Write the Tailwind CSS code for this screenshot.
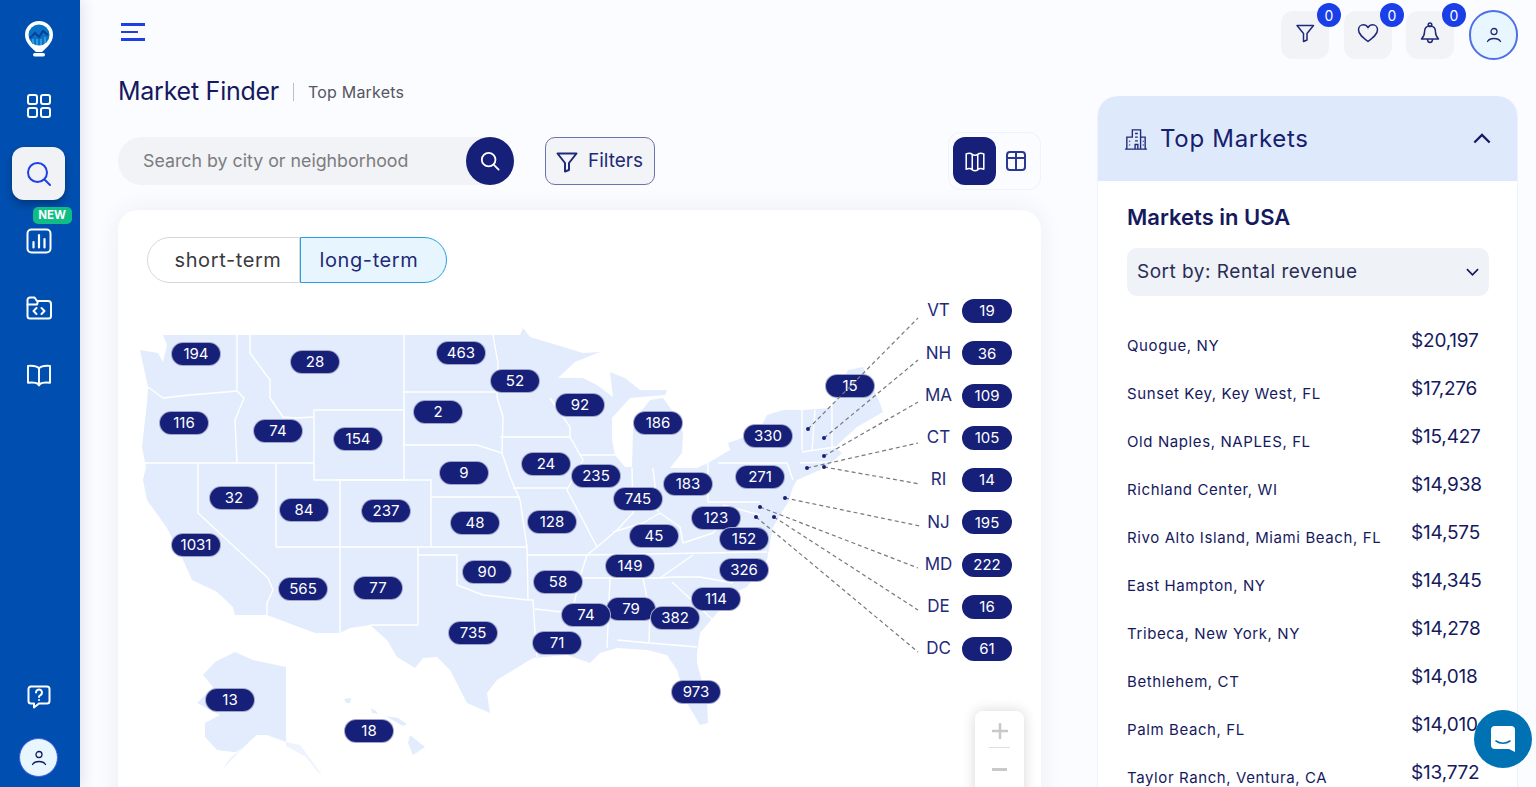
<!DOCTYPE html>
<html lang="en">
<head>
<meta charset="utf-8">
<title>Market Finder</title>
<script src="https://cdn.jsdelivr.net/npm/@tailwindcss/browser@4"></script>
</head>
<body class="h-screen w-screen overflow-hidden bg-[#fbfcff] font-['Inter','Noto_Sans',sans-serif] text-[#15195e]">
<div class="flex h-[787px] w-[1536px] overflow-hidden">
  <!-- Sidebar -->
  <aside class="relative z-10 flex h-full w-20 shrink-0 flex-col items-center bg-[#004fb0] pr-[3px] shadow-[4px_0_12px_rgba(30,50,120,0.10)]">
    <div class="mt-[20px] h-[38px] w-[30px]">
      <svg viewBox="0 0 30 38" class="h-full w-full">
        <path d="M15 1a14 14 0 0 0-14 14c0 8 7 13 11 17h6c4-4 11-9 11-17A14 14 0 0 0 15 1z" fill="#fff"/>
        <rect x="9" y="33" width="12" height="3.5" rx="1.7" fill="#fff"/>
        <circle cx="15" cy="15" r="10.5" fill="#0a72c4"/>
        <path d="M6 18l5-5 4 4 4-6 5 4" fill="none" stroke="#063f9a" stroke-width="2"/>
        <path d="M9 24v-5M13 25v-6M17 25v-6M21 23v-6" stroke="#2f9ae0" stroke-width="2"/>
      </svg>
    </div>
    <button class="mt-[34px] flex h-7 w-7 items-center justify-center text-white">
      <svg viewBox="0 0 26 26" class="h-[26px] w-[26px]" fill="none" stroke="currentColor" stroke-width="2"><rect x="2" y="2" width="9" height="9" rx="2"/><rect x="15" y="2" width="9" height="9" rx="2"/><rect x="2" y="15" width="9" height="9" rx="2"/><rect x="15" y="15" width="9" height="9" rx="2"/></svg>
    </button>
    <button class="mt-[27px] flex h-[53px] w-[53px] items-center justify-center rounded-xl bg-[#f1f2f5] text-[#1d3fe6] shadow-[0_4px_8px_rgba(0,0,0,0.3)]">
      <svg viewBox="0 0 26 26" class="h-[26px] w-[26px]" fill="none" stroke="currentColor" stroke-width="2" stroke-linecap="round"><circle cx="11.5" cy="11.5" r="9.5"/><path d="M19 19l5 5"/></svg>
    </button>
    <div class="relative mt-[27px] flex h-[28px] w-7 items-center justify-center text-white">
      <span class="absolute left-[8px] top-[-20px] flex h-[17px] w-[39px] items-center justify-center rounded-[5px] bg-[#10bd85] text-[11.5px] font-bold text-white">NEW</span>
      <svg viewBox="0 0 26 26" class="h-[26px] w-[26px]" fill="none" stroke="currentColor" stroke-width="2" stroke-linecap="round"><rect x="1.5" y="1.5" width="23" height="23" rx="4"/><path d="M7.5 14v5.5M13 7v12.5M18.5 11v8.5" stroke-width="2.2"/></svg>
    </div>
    <button class="mt-[39px] flex h-7 w-7 items-center justify-center text-white">
      <svg viewBox="0 0 26 24" class="h-[24px] w-[26px]" fill="none" stroke="currentColor" stroke-width="2" stroke-linecap="round" stroke-linejoin="round"><path d="M1.5 5V4a2.5 2.5 0 0 1 2.5-2.5h4.500l2.500 3.500h11a3 3 0 0 1 3 3V20a2.500 2.500 0 0 1-2.500 2.500H4A2.500 2.500 0 0 1 1.500 20z"/><path d="M1.500 8.500h9.500l1-3.500"/><path d="M10.500 12l-3 3 3 3M15.500 12l3 3-3 3"/></svg>
    </button>
    <button class="mt-[39px] flex h-7 w-7 items-center justify-center text-white">
      <svg viewBox="0 0 26 24" class="h-[23px] w-[26px]" fill="none" stroke="currentColor" stroke-width="2" stroke-linejoin="round"><path d="M13 4.500C10.500 2 6 1.500 1.500 2v17.500c4.500-.5 9 0 10.500 1.500l1 1.500 1-1.500c1.500-1.500 6-2 10.500-1.500V2C20 1.500 15.500 2 13 4.500z"/><path d="M13 4.500v17"/></svg>
    </button>
    <button class="mt-auto flex h-7 w-7 items-center justify-center text-white">
      <svg viewBox="0 0 24 24" class="h-[24px] w-[24px]" fill="none" stroke="currentColor" stroke-width="2" stroke-linejoin="round" stroke-linecap="round"><path d="M4 1.500h16A2.500 2.500 0 0 1 22.500 4v12a2.500 2.500 0 0 1-2.500 2.500h-8L7 22.500v-4H4A2.500 2.500 0 0 1 1.500 16V4A2.500 2.500 0 0 1 4 1.500z"/><path d="M9 7.500a3 3 0 1 1 4.500 2.600c-1 .6-1.500 1-1.500 2"/><path d="M12 15v.1"/></svg>
    </button>
    <button class="mb-[10px] mt-[27px] flex h-[39px] w-[39px] items-center justify-center rounded-full border border-[#3d5fe0] bg-[#e8f6ff] text-[#15195e]">
      <svg viewBox="0 0 16 16" class="h-[16px] w-[16px]" fill="none" stroke="currentColor" stroke-width="1.300" stroke-linecap="round"><circle cx="8" cy="4.500" r="3"/><path d="M1.500 14.500c1.500-2.500 4-3 6.500-3s5 .5 6.500 3"/></svg>
    </button>
  </aside>

  <!-- Main -->
  <div class="flex min-w-0 flex-1 flex-col pl-[38px] pr-[18px]">
    <header class="flex h-[72px] shrink-0 items-start justify-between">
      <button class="mt-[23px] ml-[3px] flex w-[24px] flex-col items-start gap-[5px]">
        <span class="h-[2.500px] w-[24px] bg-[#1d3fe6]"></span>
        <span class="h-[2.500px] w-[17px] bg-[#1d3fe6]"></span>
        <span class="h-[2.500px] w-[24px] bg-[#1d3fe6]"></span>
      </button>
      <div class="mt-[10px] flex items-start">
        <div class="relative mt-px flex h-12 w-12 items-center justify-center rounded-xl bg-[#f1f3f6] text-[#1f2a78]">
          <span class="absolute right-[-12px] top-[-8px] flex h-6 w-6 items-center justify-center rounded-full bg-[#1a3ee8] text-[14px] text-white">0</span>
          <svg viewBox="0 0 20 20" class="mb-[4px] h-[20px] w-[20px]" fill="none" stroke="currentColor" stroke-width="1.500" stroke-linejoin="round"><path d="M2 2.500h16.500l-6.500 8v6.500l-3.500 1.500v-8z"/></svg>
        </div>
        <div class="relative ml-[15px] mt-px flex h-12 w-12 items-center justify-center rounded-xl bg-[#f1f3f6] text-[#1f2a78]">
          <span class="absolute right-[-12px] top-[-8px] flex h-6 w-6 items-center justify-center rounded-full bg-[#1a3ee8] text-[14px] text-white">0</span>
          <svg viewBox="0 0 22 20" class="mb-[4px] h-[20px] w-[22px]" fill="none" stroke="currentColor" stroke-width="1.500" stroke-linejoin="round"><path d="M11 18.500C5 14 1.500 11 1.500 6.800 1.500 3.800 3.800 1.800 6.300 1.800c2 0 3.600 1 4.700 2.800 1.100-1.800 2.700-2.800 4.700-2.800 2.500 0 4.800 2 4.800 5 0 4.200-3.500 7.200-9.500 11.700z"/></svg>
        </div>
        <div class="relative ml-[14px] mt-px flex h-12 w-12 items-center justify-center rounded-xl bg-[#f1f3f6] text-[#1f2a78]">
          <span class="absolute right-[-12px] top-[-8px] flex h-6 w-6 items-center justify-center rounded-full bg-[#1a3ee8] text-[14px] text-white">0</span>
          <svg viewBox="0 0 20 22" class="mb-[4px] h-[22px] w-[20px]" fill="none" stroke="currentColor" stroke-width="1.500" stroke-linejoin="round"><path d="M10 4c-3.500 0-5.500 2.500-5.500 6 0 3-1 5-3 7h17c-2-2-3-4-3-7 0-3.500-2-6-5.500-6z"/><circle cx="10" cy="2.700" r="1.800"/><path d="M7.500 17c0 2 1 3.500 2.500 3.500s2.500-1.500 2.500-3.500"/></svg>
        </div>
        <button class="ml-[15px] flex h-[50px] w-[49px] items-center justify-center rounded-full border-2 border-[#4f6fe8] bg-[#e8f6ff] text-[#1f2a78]">
          <svg viewBox="0 0 16 16" class="h-[16px] w-[16px]" fill="none" stroke="currentColor" stroke-width="1.300" stroke-linecap="round"><circle cx="8" cy="4.500" r="3"/><path d="M1.500 14.500c1.500-2.500 4-3 6.500-3s5 .5 6.500 3"/></svg>
        </button>
      </div>
    </header>

    <div class="flex min-h-0 flex-1 items-start gap-[56px]">
      <!-- Left column -->
      <div class="flex w-[923px] shrink-0 flex-col">
        <div class="flex h-[38px] items-center pt-px">
          <h1 class="text-[25px] tracking-[-0.25px] text-[#15195e]">Market Finder</h1>
          <span class="ml-[14px] h-[18px] w-px bg-[#bdbdc4]"></span>
          <span class="ml-[14px] text-[16px] tracking-[0.2px] text-[#55565e]">Top Markets</span>
        </div>
        <div class="mt-[22px] flex h-[58px] items-center">
          <div class="flex h-12 w-[396px] items-center justify-between rounded-full bg-[#f1f3f6] pl-[25px]">
            <span class="text-[17.800px] text-[#7c7c80]">Search by city or neighborhood</span>
            <button class="flex h-12 w-12 items-center justify-center rounded-full bg-[#162079] text-white">
              <svg viewBox="0 0 22 22" class="h-[20px] w-[20px]" fill="none" stroke="currentColor" stroke-width="2" stroke-linecap="round"><circle cx="9.500" cy="9.500" r="7.500"/><path d="M15 15l5.500 5.500"/></svg>
            </button>
          </div>
          <button class="ml-[31px] flex h-12 w-[110px] items-center gap-[10px] rounded-[10px] border border-[#6b74ad] bg-[#f2f4f8] pl-[10px] pt-px text-[19px] text-[#1f2a78]">
            <svg viewBox="0 0 22 22" class="h-[22px] w-[22px]" fill="none" stroke="currentColor" stroke-width="2" stroke-linejoin="round"><path d="M1.500 2.500h19l-7.500 9.500v7l-4 1.500v-8.500z"/></svg>
            <span>Filters</span>
          </button>
          <div class="ml-auto flex h-[58px] w-[93px] items-center rounded-xl border border-[#eef2fd] pl-[4px]">
            <button class="flex h-12 w-[43px] items-center justify-center rounded-xl bg-[#162079] text-white">
              <svg viewBox="0 0 20 20" class="h-[22px] w-[22px]" fill="none" stroke="currentColor" stroke-width="1.400" stroke-linejoin="round"><path d="M2 3.500c2.500-1 4-1 5.500.5v14c-1.500-1.500-3-1.500-5.500-.5zM7.500 4c1.500 1 3.500 1 5 0v14c-1.500 1-3.500 1-5 0zM12.500 4c1.500-1.500 3-1.500 5.500-.5v14c-2.500-1-4-1-5.500.5z"/></svg>
            </button>
            <button class="ml-[9px] flex h-[22px] w-[22px] items-center justify-center text-[#2b3a90]">
              <svg viewBox="0 0 20 20" class="h-[20px] w-[20px]" fill="none" stroke="currentColor" stroke-width="2"><rect x="1" y="1" width="18" height="18" rx="3"/><path d="M1 7h18M10 1v18"/></svg>
            </button>
          </div>
        </div>

        <!-- Map card -->
        <section class="relative mt-[20px] h-[640px] w-[923px] rounded-[20px] bg-white shadow-[0_0_24px_rgba(30,40,110,0.07)]">
          <div class="absolute left-[29px] top-[27px] flex h-[46px] text-[20px]">
            <button class="w-[153px] rounded-l-full border border-[#d8d8d8] bg-white pl-[9px] tracking-[0.6px] text-[#3a3a3f]">short-term</button>
            <button class="w-[147px] rounded-r-full border border-[#2a9fe0] bg-[#e7f6fe] pr-[9px] tracking-[0.6px] text-[#1f2a78]">long-term</button>
          </div>

          <svg class="absolute left-0 top-0" width="923" height="577" viewBox="118 210 923 577">
            <g fill="#e3ecfd">
              <path d="M163 335L404 335L493 335L520 335L523 328L530 337L557 345L583 353L600 352L575 362L558 378L583 378L597 385L613 397L610 372L625 378L640 390L667 390L665 395L630 398L612 418L612 440L615 455L625 467L632 467L633 430L640 413L650 400L663 398L677 417L683 433L682 453L670 468L697 468L708 463L730 450L728 443L750 435L763 423L767 415L783 410L802 410L832 408L848 370L863 367L880 403L883 412L857 427L835 447L842 453L827 467L797 480L793 487L788 503L785 507L773 527L767 560L747 587L733 593L717 613L700 633L697 653L697 663L707 700L708 723L700 725L687 703L677 670L667 655L647 650L617 648L600 653L590 663L567 655L533 658L497 680L487 693L490 713L467 703L450 670L437 657L423 658L415 668L397 657L387 640L370 625L350 628L340 633L315 633L267 615L235 615L233 607L217 592L192 580L180 553L167 528L147 500L143 480L146 467L142 447L147 403L148 387L140 350L158 353L163 362L167 345z"/>
              <path d="M235 652L253 660L286 667L286 742L278 739L267 735L257 735L250 741L243 748L236 752L233 752L217 750L205 737L205 723L220 715L197 703L213 687L203 675L215 662z"/>
              <path d="M410 735L425 747L413 755L408 743z"/>
              <path d="M344 699L351 698L350 703L346 703z"/>
              <path d="M371 708L376 711L378 714L372 713z"/>
              <path d="M386 716L398 718L407 724L403 726L394 721z"/>
            </g>
            <g fill="#eef3fe">
              <path d="M286 742L300 745L322 775L318 772L306 757L286 746z"/>
              <path d="M243 748L222 770L230 758z"/>
            </g>
            <g fill="none" stroke="#fff" stroke-width="1.400" stroke-linejoin="round">
              <path d="M237 335L237 390M250 335L250 353L270 380L270 398L283 417L297 418L313 417"/>
              <path d="M148 387L163 398L190 395L237 391L244 398L235 420L237 463"/>
              <path d="M145 463L314 463M314 410L404 410L404 480L314 480z"/>
              <path d="M404 335L404 445M404 392L502 392M404 445L477 445L502 453"/>
              <path d="M493 335L498 363L497 397L503 417L502 453L510 477L520 500L527 547L528 600"/>
              <path d="M340 480L431 480L431 547M340 480L340 633M431 497L520 497"/>
              <path d="M276 463L276 547M276 547L527 547"/>
              <path d="M198 463L198 513L268 578L273 590L267 603L267 615"/>
              <path d="M418 547L418 625L370 625M418 555L457 555L457 585L483 595L528 600L533 600L535 633L537 657"/>
              <path d="M500 437L570 437M513 488L568 488M550 398L570 427L570 437L583 460L567 490L583 520L597 547L587 555L580 577L572 613L535 609"/>
              <path d="M527 555L587 555L767 552M583 578L660 578L693 555"/>
              <path d="M580 455L615 455M632 468L633 513L617 530L597 547M653 468L658 512"/>
              <path d="M613 532L643 523L660 513L680 527L683 543L713 533L730 515"/>
              <path d="M610 578L607 648M643 578L650 613L649 643L617 640M650 643L697 647"/>
              <path d="M660 578L673 577L700 577L733 583M672 582L713 620"/>
              <path d="M708 463L708 502L760 502M718 463L787 463L793 480M723 505L760 515"/>
              <path d="M802 410L802 450M815 410L812 450M832 408L832 450M802 452L835 447M800 463L830 462M822 462L822 472"/>
            </g>
          </svg>

          <!-- Pins -->
          <div class="absolute left-[78px] top-[144px] flex h-[24px] w-[50px] -translate-x-1/2 -translate-y-1/2 items-center justify-center rounded-full border border-white/60 bg-[#162079] pt-px text-[15px] text-white">194</div>
          <div class="absolute left-[197px] top-[152px] flex h-[24px] w-[50px] -translate-x-1/2 -translate-y-1/2 items-center justify-center rounded-full border border-white/60 bg-[#162079] pt-px text-[15px] text-white">28</div>
          <div class="absolute left-[343px] top-[143px] flex h-[24px] w-[50px] -translate-x-1/2 -translate-y-1/2 items-center justify-center rounded-full border border-white/60 bg-[#162079] pt-px text-[15px] text-white">463</div>
          <div class="absolute left-[397px] top-[171px] flex h-[24px] w-[50px] -translate-x-1/2 -translate-y-1/2 items-center justify-center rounded-full border border-white/60 bg-[#162079] pt-px text-[15px] text-white">52</div>
          <div class="absolute left-[66px] top-[213px] flex h-[24px] w-[50px] -translate-x-1/2 -translate-y-1/2 items-center justify-center rounded-full border border-white/60 bg-[#162079] pt-px text-[15px] text-white">116</div>
          <div class="absolute left-[160px] top-[221px] flex h-[24px] w-[50px] -translate-x-1/2 -translate-y-1/2 items-center justify-center rounded-full border border-white/60 bg-[#162079] pt-px text-[15px] text-white">74</div>
          <div class="absolute left-[320px] top-[202px] flex h-[24px] w-[50px] -translate-x-1/2 -translate-y-1/2 items-center justify-center rounded-full border border-white/60 bg-[#162079] pt-px text-[15px] text-white">2</div>
          <div class="absolute left-[240px] top-[229px] flex h-[24px] w-[50px] -translate-x-1/2 -translate-y-1/2 items-center justify-center rounded-full border border-white/60 bg-[#162079] pt-px text-[15px] text-white">154</div>
          <div class="absolute left-[462px] top-[195px] flex h-[24px] w-[50px] -translate-x-1/2 -translate-y-1/2 items-center justify-center rounded-full border border-white/60 bg-[#162079] pt-px text-[15px] text-white">92</div>
          <div class="absolute left-[540px] top-[213px] flex h-[24px] w-[50px] -translate-x-1/2 -translate-y-1/2 items-center justify-center rounded-full border border-white/60 bg-[#162079] pt-px text-[15px] text-white">186</div>
          <div class="absolute left-[650px] top-[226px] flex h-[24px] w-[50px] -translate-x-1/2 -translate-y-1/2 items-center justify-center rounded-full border border-white/60 bg-[#162079] pt-px text-[15px] text-white">330</div>
          <div class="absolute left-[732px] top-[176px] flex h-[24px] w-[50px] -translate-x-1/2 -translate-y-1/2 items-center justify-center rounded-full border border-white/60 bg-[#162079] pt-px text-[15px] text-white">15</div>
          <div class="absolute left-[428px] top-[254px] flex h-[24px] w-[50px] -translate-x-1/2 -translate-y-1/2 items-center justify-center rounded-full border border-white/60 bg-[#162079] pt-px text-[15px] text-white">24</div>
          <div class="absolute left-[478px] top-[266px] flex h-[24px] w-[50px] -translate-x-1/2 -translate-y-1/2 items-center justify-center rounded-full border border-white/60 bg-[#162079] pt-px text-[15px] text-white">235</div>
          <div class="absolute left-[346px] top-[263px] flex h-[24px] w-[50px] -translate-x-1/2 -translate-y-1/2 items-center justify-center rounded-full border border-white/60 bg-[#162079] pt-px text-[15px] text-white">9</div>
          <div class="absolute left-[520px] top-[289px] flex h-[24px] w-[50px] -translate-x-1/2 -translate-y-1/2 items-center justify-center rounded-full border border-white/60 bg-[#162079] pt-px text-[15px] text-white">745</div>
          <div class="absolute left-[570px] top-[274px] flex h-[24px] w-[50px] -translate-x-1/2 -translate-y-1/2 items-center justify-center rounded-full border border-white/60 bg-[#162079] pt-px text-[15px] text-white">183</div>
          <div class="absolute left-[642px] top-[267px] flex h-[24px] w-[50px] -translate-x-1/2 -translate-y-1/2 items-center justify-center rounded-full border border-white/60 bg-[#162079] pt-px text-[15px] text-white">271</div>
          <div class="absolute left-[116px] top-[288px] flex h-[24px] w-[50px] -translate-x-1/2 -translate-y-1/2 items-center justify-center rounded-full border border-white/60 bg-[#162079] pt-px text-[15px] text-white">32</div>
          <div class="absolute left-[186px] top-[300px] flex h-[24px] w-[50px] -translate-x-1/2 -translate-y-1/2 items-center justify-center rounded-full border border-white/60 bg-[#162079] pt-px text-[15px] text-white">84</div>
          <div class="absolute left-[268px] top-[301px] flex h-[24px] w-[50px] -translate-x-1/2 -translate-y-1/2 items-center justify-center rounded-full border border-white/60 bg-[#162079] pt-px text-[15px] text-white">237</div>
          <div class="absolute left-[357px] top-[313px] flex h-[24px] w-[50px] -translate-x-1/2 -translate-y-1/2 items-center justify-center rounded-full border border-white/60 bg-[#162079] pt-px text-[15px] text-white">48</div>
          <div class="absolute left-[434px] top-[312px] flex h-[24px] w-[50px] -translate-x-1/2 -translate-y-1/2 items-center justify-center rounded-full border border-white/60 bg-[#162079] pt-px text-[15px] text-white">128</div>
          <div class="absolute left-[598px] top-[308px] flex h-[24px] w-[50px] -translate-x-1/2 -translate-y-1/2 items-center justify-center rounded-full border border-white/60 bg-[#162079] pt-px text-[15px] text-white">123</div>
          <div class="absolute left-[536px] top-[326px] flex h-[24px] w-[50px] -translate-x-1/2 -translate-y-1/2 items-center justify-center rounded-full border border-white/60 bg-[#162079] pt-px text-[15px] text-white">45</div>
          <div class="absolute left-[626px] top-[329px] flex h-[24px] w-[50px] -translate-x-1/2 -translate-y-1/2 items-center justify-center rounded-full border border-white/60 bg-[#162079] pt-px text-[15px] text-white">152</div>
          <div class="absolute left-[78px] top-[335px] flex h-[24px] w-[50px] -translate-x-1/2 -translate-y-1/2 items-center justify-center rounded-full border border-white/60 bg-[#162079] pt-px text-[15px] text-white">1031</div>
          <div class="absolute left-[369px] top-[362px] flex h-[24px] w-[50px] -translate-x-1/2 -translate-y-1/2 items-center justify-center rounded-full border border-white/60 bg-[#162079] pt-px text-[15px] text-white">90</div>
          <div class="absolute left-[512px] top-[356px] flex h-[24px] w-[50px] -translate-x-1/2 -translate-y-1/2 items-center justify-center rounded-full border border-white/60 bg-[#162079] pt-px text-[15px] text-white">149</div>
          <div class="absolute left-[626px] top-[360px] flex h-[24px] w-[50px] -translate-x-1/2 -translate-y-1/2 items-center justify-center rounded-full border border-white/60 bg-[#162079] pt-px text-[15px] text-white">326</div>
          <div class="absolute left-[440px] top-[372px] flex h-[24px] w-[50px] -translate-x-1/2 -translate-y-1/2 items-center justify-center rounded-full border border-white/60 bg-[#162079] pt-px text-[15px] text-white">58</div>
          <div class="absolute left-[185px] top-[379px] flex h-[24px] w-[50px] -translate-x-1/2 -translate-y-1/2 items-center justify-center rounded-full border border-white/60 bg-[#162079] pt-px text-[15px] text-white">565</div>
          <div class="absolute left-[260px] top-[378px] flex h-[24px] w-[50px] -translate-x-1/2 -translate-y-1/2 items-center justify-center rounded-full border border-white/60 bg-[#162079] pt-px text-[15px] text-white">77</div>
          <div class="absolute left-[598px] top-[389px] flex h-[24px] w-[50px] -translate-x-1/2 -translate-y-1/2 items-center justify-center rounded-full border border-white/60 bg-[#162079] pt-px text-[15px] text-white">114</div>
          <div class="absolute left-[513px] top-[399px] flex h-[24px] w-[50px] -translate-x-1/2 -translate-y-1/2 items-center justify-center rounded-full border border-white/60 bg-[#162079] pt-px text-[15px] text-white">79</div>
          <div class="absolute left-[468px] top-[405px] flex h-[24px] w-[50px] -translate-x-1/2 -translate-y-1/2 items-center justify-center rounded-full border border-white/60 bg-[#162079] pt-px text-[15px] text-white">74</div>
          <div class="absolute left-[557px] top-[408px] flex h-[24px] w-[50px] -translate-x-1/2 -translate-y-1/2 items-center justify-center rounded-full border border-white/60 bg-[#162079] pt-px text-[15px] text-white">382</div>
          <div class="absolute left-[355px] top-[423px] flex h-[24px] w-[50px] -translate-x-1/2 -translate-y-1/2 items-center justify-center rounded-full border border-white/60 bg-[#162079] pt-px text-[15px] text-white">735</div>
          <div class="absolute left-[439px] top-[433px] flex h-[24px] w-[50px] -translate-x-1/2 -translate-y-1/2 items-center justify-center rounded-full border border-white/60 bg-[#162079] pt-px text-[15px] text-white">71</div>
          <div class="absolute left-[578px] top-[482px] flex h-[24px] w-[50px] -translate-x-1/2 -translate-y-1/2 items-center justify-center rounded-full border border-white/60 bg-[#162079] pt-px text-[15px] text-white">973</div>
          <div class="absolute left-[112px] top-[490px] flex h-[24px] w-[50px] -translate-x-1/2 -translate-y-1/2 items-center justify-center rounded-full border border-white/60 bg-[#162079] pt-px text-[15px] text-white">13</div>
          <div class="absolute left-[251px] top-[521px] flex h-[24px] w-[50px] -translate-x-1/2 -translate-y-1/2 items-center justify-center rounded-full border border-white/60 bg-[#162079] pt-px text-[15px] text-white">18</div>

          <!-- Leader lines -->
          <svg class="pointer-events-none absolute left-0 top-0" width="923" height="577" viewBox="118 210 923 577">
            <g fill="none" stroke="#77787f" stroke-width="1.200" stroke-dasharray="4 3">
              <path d="M808 429L918 318M824 438L918 360M824 456L918 402M807 468L918 443M824 467L920 484M785 498L920 526M760 507L918 568M774 517L918 610M756 517L918 652"/>
            </g>
            <g fill="#162079">
              <circle cx="808" cy="429" r="2"/><circle cx="824" cy="438" r="2"/><circle cx="824" cy="456" r="2"/><circle cx="807" cy="468" r="2"/><circle cx="824" cy="467" r="2"/><circle cx="785" cy="498" r="2"/><circle cx="760" cy="507" r="2"/><circle cx="774" cy="517" r="2"/><circle cx="756" cy="517" r="2"/>
            </g>
          </svg>

          <!-- Small state legend -->
          <div class="absolute left-[800px] top-[89px] flex w-[95px] flex-col gap-[18.250px] text-[17px] text-[#1f2a78]">
            <div class="flex h-6 items-center justify-between"><span class="w-[41px] text-center">VT</span><span class="mr-px flex h-6 w-[50px] items-center justify-center rounded-full bg-[#162079] pt-px text-[15px] text-white">19</span></div>
            <div class="flex h-6 items-center justify-between"><span class="w-[41px] text-center">NH</span><span class="mr-px flex h-6 w-[50px] items-center justify-center rounded-full bg-[#162079] pt-px text-[15px] text-white">36</span></div>
            <div class="flex h-6 items-center justify-between"><span class="w-[41px] text-center">MA</span><span class="mr-px flex h-6 w-[50px] items-center justify-center rounded-full bg-[#162079] pt-px text-[15px] text-white">109</span></div>
            <div class="flex h-6 items-center justify-between"><span class="w-[41px] text-center">CT</span><span class="mr-px flex h-6 w-[50px] items-center justify-center rounded-full bg-[#162079] pt-px text-[15px] text-white">105</span></div>
            <div class="flex h-6 items-center justify-between"><span class="w-[41px] text-center">RI</span><span class="mr-px flex h-6 w-[50px] items-center justify-center rounded-full bg-[#162079] pt-px text-[15px] text-white">14</span></div>
            <div class="flex h-6 items-center justify-between"><span class="w-[41px] text-center">NJ</span><span class="mr-px flex h-6 w-[50px] items-center justify-center rounded-full bg-[#162079] pt-px text-[15px] text-white">195</span></div>
            <div class="flex h-6 items-center justify-between"><span class="w-[41px] text-center">MD</span><span class="mr-px flex h-6 w-[50px] items-center justify-center rounded-full bg-[#162079] pt-px text-[15px] text-white">222</span></div>
            <div class="flex h-6 items-center justify-between"><span class="w-[41px] text-center">DE</span><span class="mr-px flex h-6 w-[50px] items-center justify-center rounded-full bg-[#162079] pt-px text-[15px] text-white">16</span></div>
            <div class="flex h-6 items-center justify-between"><span class="w-[41px] text-center">DC</span><span class="mr-px flex h-6 w-[50px] items-center justify-center rounded-full bg-[#162079] pt-px text-[15px] text-white">61</span></div>
          </div>

          <!-- Zoom control -->
          <div class="absolute left-[857px] top-[501px] flex h-[96px] w-[49px] flex-col items-center rounded-lg bg-white pt-[12px] shadow-[0_0_14px_rgba(0,0,0,0.16)]">
            <svg viewBox="0 0 16 16" class="h-[16px] w-[16px]" stroke="#c9c9c9" stroke-width="2.500"><path d="M8 0v16M0 8h16"/></svg>
            <span class="mt-[8px] h-px w-[21px] bg-[#e0e0e0]"></span>
            <span class="mt-[20px] h-[3px] w-[15px] bg-[#c9c9c9]"></span>
          </div>
        </section>
      </div>

      <!-- Right panel -->
      <aside class="mt-[24px] h-[700px] w-[421px] shrink-0 rounded-t-[20px] border-x border-[#eef2fd] bg-white">
        <div class="flex h-[85px] items-center rounded-t-[20px] bg-[#dfe9fc] pl-[27px] pr-[26px]">
          <svg viewBox="0 0 24 24" class="h-[22px] w-[22px] text-[#1f2a78]" fill="none" stroke="currentColor" stroke-width="1.500"><path d="M2 23V10h6V2h9v21M17 10h5v13M0 23h24M11 6h3M11 10h3M11 14h3M5 14v1M5 18v1M20 14v1M20 18v1M11 18h3v5h-3z"/></svg>
          <h2 class="ml-[13px] text-[24px] tracking-[0.7px] text-[#15206f]">Top Markets</h2>
          <svg viewBox="0 0 20 12" class="ml-auto h-[11px] w-[18px] text-[#15195e]" fill="none" stroke="currentColor" stroke-width="2.500"><path d="M1.500 10.500L10 2l8.500 8.500"/></svg>
        </div>
        <div class="pl-[29px] pr-[29px]">
          <h3 class="mt-[20px] text-[22px] font-semibold text-[#15195e]">Markets in USA</h3>
          <div class="mt-[14px] flex h-12 w-[362px] items-center justify-between rounded-[10px] bg-[#eff2f7] pl-[10px] pr-[10px]">
            <span class="text-[19px] tracking-[0.5px] text-[#2a2d55]">Sort by: Rental revenue</span>
            <svg viewBox="0 0 14 8" class="h-[8px] w-[13px] text-[#15195e]" fill="none" stroke="currentColor" stroke-width="1.800"><path d="M1 1l6 6 6-6"/></svg>
          </div>
          <ul class="mt-[26px] flex flex-col text-[#15195e]">
            <li class="flex h-12 items-center justify-between"><span class="text-[15px] tracking-[0.6px]">Quogue, NY</span><span class="mb-[10px] mr-[10px] w-[67px] whitespace-nowrap text-[19px] tracking-[-0.2px]">$20,197</span></li>
            <li class="flex h-12 items-center justify-between"><span class="text-[15px] tracking-[0.6px]">Sunset Key, Key West, FL</span><span class="mb-[10px] mr-[10px] w-[67px] whitespace-nowrap text-[19px] tracking-[-0.2px]">$17,276</span></li>
            <li class="flex h-12 items-center justify-between"><span class="text-[15px] tracking-[0.6px]">Old Naples, NAPLES, FL</span><span class="mb-[10px] mr-[10px] w-[67px] whitespace-nowrap text-[19px] tracking-[-0.2px]">$15,427</span></li>
            <li class="flex h-12 items-center justify-between"><span class="text-[15px] tracking-[0.6px]">Richland Center, WI</span><span class="mb-[10px] mr-[10px] w-[67px] whitespace-nowrap text-[19px] tracking-[-0.2px]">$14,938</span></li>
            <li class="flex h-12 items-center justify-between"><span class="text-[15px] tracking-[0.6px]">Rivo Alto Island, Miami Beach, FL</span><span class="mb-[10px] mr-[10px] w-[67px] whitespace-nowrap text-[19px] tracking-[-0.2px]">$14,575</span></li>
            <li class="flex h-12 items-center justify-between"><span class="text-[15px] tracking-[0.6px]">East Hampton, NY</span><span class="mb-[10px] mr-[10px] w-[67px] whitespace-nowrap text-[19px] tracking-[-0.2px]">$14,345</span></li>
            <li class="flex h-12 items-center justify-between"><span class="text-[15px] tracking-[0.6px]">Tribeca, New York, NY</span><span class="mb-[10px] mr-[10px] w-[67px] whitespace-nowrap text-[19px] tracking-[-0.2px]">$14,278</span></li>
            <li class="flex h-12 items-center justify-between"><span class="text-[15px] tracking-[0.6px]">Bethlehem, CT</span><span class="mb-[10px] mr-[10px] w-[67px] whitespace-nowrap text-[19px] tracking-[-0.2px]">$14,018</span></li>
            <li class="flex h-12 items-center justify-between"><span class="text-[15px] tracking-[0.6px]">Palm Beach, FL</span><span class="mb-[10px] mr-[10px] w-[67px] whitespace-nowrap text-[19px] tracking-[-0.2px]">$14,010</span></li>
            <li class="flex h-12 items-center justify-between"><span class="text-[15px] tracking-[0.6px]">Taylor Ranch, Ventura, CA</span><span class="mb-[10px] mr-[10px] w-[67px] whitespace-nowrap text-[19px] tracking-[-0.2px]">$13,772</span></li>
          </ul>
        </div>
      </aside>
    </div>
  </div>

  <!-- Chat launcher -->
  <button class="fixed bottom-[19px] right-[4px] z-20 flex h-[58px] w-[58px] items-center justify-center rounded-full bg-[#0071b2]">
    <svg viewBox="0 0 24 26" class="h-[26px] w-[24px]"><path d="M4 0h16a4 4 0 0 1 4 4v22l-6-3H4a4 4 0 0 1-4-4V4a4 4 0 0 1 4-4z" fill="#fff"/><path d="M5 15c4 3 10 3 14 0" fill="none" stroke="#0071b2" stroke-width="1.600" stroke-linecap="round"/></svg>
  </button>
</div>
</body>
</html>
